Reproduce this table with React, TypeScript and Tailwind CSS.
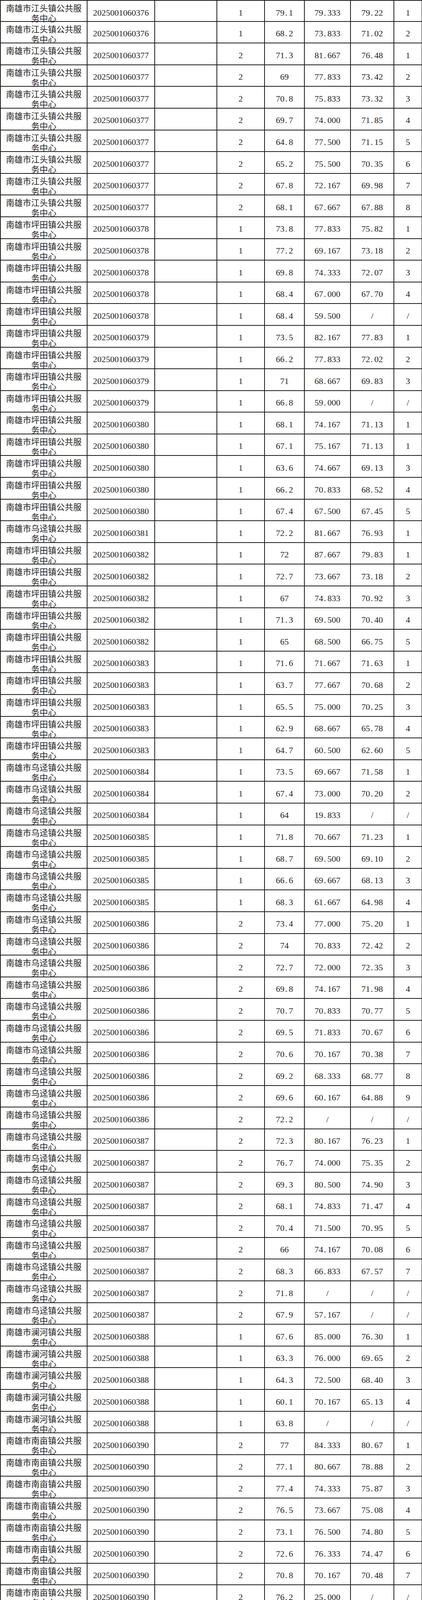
const PLACES: Record<string, string> = {
  jt: "南雄市江头镇公共服务中心",
  pt: "南雄市坪田镇公共服务中心",
  wj: "南雄市乌迳镇公共服务中心",
  lh: "南雄市澜河镇公共服务中心",
  nm: "南雄市南亩镇公共服务中心",
  jly: "南雄市南亩镇敬老院",
  hk: "南雄市湖口镇公共服务中心",
}

const DATA = `jt 0376 1 79.1 79.333 79.22 1
jt 0376 1 68.2 73.833 71.02 2
jt 0377 2 71.3 81.667 76.48 1
jt 0377 2 69 77.833 73.42 2
jt 0377 2 70.8 75.833 73.32 3
jt 0377 2 69.7 74.000 71.85 4
jt 0377 2 64.8 77.500 71.15 5
jt 0377 2 65.2 75.500 70.35 6
jt 0377 2 67.8 72.167 69.98 7
jt 0377 2 68.1 67.667 67.88 8
pt 0378 1 73.8 77.833 75.82 1
pt 0378 1 77.2 69.167 73.18 2
pt 0378 1 69.8 74.333 72.07 3
pt 0378 1 68.4 67.000 67.70 4
pt 0378 1 68.4 59.500 / /
pt 0379 1 73.5 82.167 77.83 1
pt 0379 1 66.2 77.833 72.02 2
pt 0379 1 71 68.667 69.83 3
pt 0379 1 66.8 59.000 / /
pt 0380 1 68.1 74.167 71.13 1
pt 0380 1 67.1 75.167 71.13 1
pt 0380 1 63.6 74.667 69.13 3
pt 0380 1 66.2 70.833 68.52 4
pt 0380 1 67.4 67.500 67.45 5
wj 0381 1 72.2 81.667 76.93 1
pt 0382 1 72 87.667 79.83 1
pt 0382 1 72.7 73.667 73.18 2
pt 0382 1 67 74.833 70.92 3
pt 0382 1 71.3 69.500 70.40 4
pt 0382 1 65 68.500 66.75 5
pt 0383 1 71.6 71.667 71.63 1
pt 0383 1 63.7 77.667 70.68 2
pt 0383 1 65.5 75.000 70.25 3
pt 0383 1 62.9 68.667 65.78 4
pt 0383 1 64.7 60.500 62.60 5
wj 0384 1 73.5 69.667 71.58 1
wj 0384 1 67.4 73.000 70.20 2
wj 0384 1 64 19.833 / /
wj 0385 1 71.8 70.667 71.23 1
wj 0385 1 68.7 69.500 69.10 2
wj 0385 1 66.6 69.667 68.13 3
wj 0385 1 68.3 61.667 64.98 4
wj 0386 2 73.4 77.000 75.20 1
wj 0386 2 74 70.833 72.42 2
wj 0386 2 72.7 72.000 72.35 3
wj 0386 2 69.8 74.167 71.98 4
wj 0386 2 70.7 70.833 70.77 5
wj 0386 2 69.5 71.833 70.67 6
wj 0386 2 70.6 70.167 70.38 7
wj 0386 2 69.2 68.333 68.77 8
wj 0386 2 69.6 60.167 64.88 9
wj 0386 2 72.2 / / /
wj 0387 2 72.3 80.167 76.23 1
wj 0387 2 76.7 74.000 75.35 2
wj 0387 2 69.3 80.500 74.90 3
wj 0387 2 68.1 74.833 71.47 4
wj 0387 2 70.4 71.500 70.95 5
wj 0387 2 66 74.167 70.08 6
wj 0387 2 68.3 66.833 67.57 7
wj 0387 2 71.8 / / /
wj 0387 2 67.9 57.167 / /
lh 0388 1 67.6 85.000 76.30 1
lh 0388 1 63.3 76.000 69.65 2
lh 0388 1 64.3 72.500 68.40 3
lh 0388 1 60.1 70.167 65.13 4
lh 0388 1 63.8 / / /
nm 0390 2 77 84.333 80.67 1
nm 0390 2 77.1 80.667 78.88 2
nm 0390 2 77.4 74.333 75.87 3
nm 0390 2 76.5 73.667 75.08 4
nm 0390 2 73.1 76.500 74.80 5
nm 0390 2 72.6 76.333 74.47 6
nm 0390 2 70.8 70.167 70.48 7
nm 0390 2 76.2 25.000 / /
nm 0391 1 71.6 78.167 74.88 1
nm 0391 1 65 73.833 69.42 2
jly 0392 1 76.1 79.667 77.88 1
jly 0392 1 64.5 74.000 69.25 2
jly 0392 1 68.2 60.833 64.52 3
jly 0392 1 74.5 0.000 / /
hk 0393 1 69.3 80.833 75.07 1
hk 0393 1 64.5 77.500 71.00 2
hk 0393 1 64.6 71.167 67.88 3
hk 0393 1 64.9 67.333 66.12 4
hk 0394 1 77.5 71.667 74.58 1
hk 0394 1 72.8 72.833 72.82 2
hk 0394 1 71.2 73.333 72.27 3
hk 0394 1 75.6 67.167 71.38 4
hk 0394 1 73.2 61.667 67.43 5
hk 0395 1 66.4 86.167 76.28 1
hk 0395 1 62.8 73.500 68.15 2
hk 0395 1 62.9 72.667 67.78 3
hk 0396 1 82.2 79.833 81.02 1
hk 0396 1 77.4 80.000 78.70 2
hk 0396 1 74.8 70.333 72.57 3
hk 0396 1 74.3 55.167 / /
hk 0396 1 73 / / /
hk 0397 1 66.2 75.333 70.77 1
hk 0397 1 64.7 73.167 68.93 2
hk 0398 1 61 73.333 67.17 1`

const rows = DATA.split("\n").map((line) => line.trim().split(" "))

// SimSun-style half-width period: give the dot its own 0.5em cell
function Num({ value }: { value: string }) {
  return (
    <span className="whitespace-nowrap">
      {value.split("").map((ch, i) =>
        ch === "." ? (
          <span key={i} className="inline-block w-[0.5em] pl-[0.08em] text-left">
            .
          </span>
        ) : (
          <span key={i}>{ch}</span>
        )
      )}
    </span>
  )
}

const cell = "flex items-center justify-center border-r-2 border-[#1c1c1c]"
const numCell = `${cell} pt-[4px]`

export default function App() {
  return (
    <div className="w-[1080px] bg-white text-[#1e1e1e] font-['Liberation_Serif','Noto_Sans_CJK_SC',serif] text-[22px] leading-none">
      {rows.map(([place, code, count, written, interview, total, rank], i) => {
        const thin = place === "jly"
        return (
          <div
            key={i}
            className={`grid grid-cols-[222px_173px_159px_122px_102px_118px_111px_72px] border-b-2 border-l-2 border-[#1c1c1c] ${
              i === 0 ? "border-t-2" : ""
            } ${thin ? "h-[28px]" : "h-[55.6px]"}`}
          >
            <div
              className={`${cell} px-[6px] text-center font-['Noto_Sans_CJK_SC',sans-serif] text-[21.5px] ${
                thin ? "pt-[2px] leading-[24px]" : "pt-[5px] leading-[26px]"
              }`}
            >
              {PLACES[place]}
            </div>
            <div className={numCell}>202500106{code}</div>
            <div className={cell}></div>
            <div className={numCell}>{count}</div>
            <div className={numCell}>
              <Num value={written} />
            </div>
            <div className={numCell}>
              <Num value={interview} />
            </div>
            <div className={numCell}>
              <Num value={total} />
            </div>
            <div className={numCell}>{rank}</div>
          </div>
        )
      })}
    </div>
  )
}
